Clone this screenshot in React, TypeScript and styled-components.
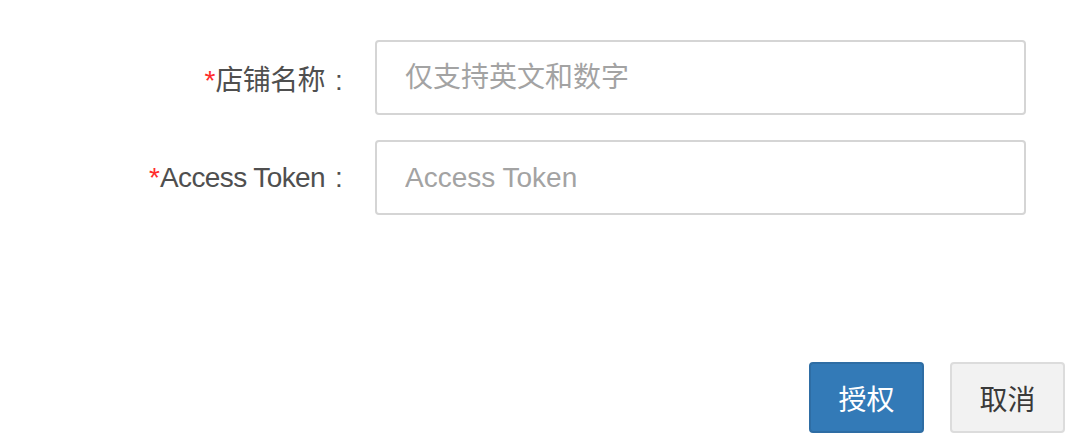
import styled, { createGlobalStyle } from 'styled-components';

const GlobalStyle = createGlobalStyle`
  html, body {
    margin: 0;
    padding: 0;
    background: #ffffff;
  }
  body {
    font-family: 'Liberation Sans', 'Noto Sans CJK SC', sans-serif;
  }
`;

const Form = styled.form`
  width: 1080px;
  height: 445px;
  box-sizing: border-box;
  padding: 40px 15px 0 0;
  display: flex;
  flex-direction: column;
`;

const FormRow = styled.div`
  display: grid;
  grid-template-columns: 347px 651px;
  column-gap: 28px;
  align-items: center;
  height: 75px;
  margin-bottom: 25px;
`;

const Label = styled.label`
  text-align: right;
  font-size: 28px;
  letter-spacing: -0.6px;
  color: #4f4f4f;
  white-space: nowrap;
`;

const Required = styled.span`
  color: #ff2b2b;
  letter-spacing: 0;
`;

const Colon = styled.span`
  display: inline-block;
  width: 16px;
  margin-left: 6px;
  text-align: center;
  letter-spacing: 0;
`;

const Input = styled.input`
  width: 100%;
  height: 75px;
  box-sizing: border-box;
  border: 2px solid #d5d5d5;
  border-radius: 4px;
  padding: 0 0 0 28px;
  font-family: 'Liberation Sans', 'Noto Sans CJK SC', sans-serif;
  font-size: 28px;
  color: #555555;
  outline: none;

  &::placeholder {
    color: #a3a3a3;
  }
`;

const Footer = styled.div`
  display: flex;
  justify-content: flex-end;
  gap: 26px;
  margin-top: 122px;
`;

const Button = styled.button<{ $primary?: boolean }>`
  width: 115px;
  height: 71px;
  box-sizing: border-box;
  border-radius: 4px;
  border: 2px solid ${(p) => (p.$primary ? '#2e6da4' : '#dcdcdc')};
  background: ${(p) => (p.$primary ? '#337ab7' : '#f2f2f2')};
  color: ${(p) => (p.$primary ? '#ffffff' : '#3a3a3a')};
  font-family: 'Liberation Sans', 'Noto Sans CJK SC', sans-serif;
  font-size: 28px;
  cursor: pointer;
  padding: 0;
`;

export default function App() {
  return (
    <>
      <GlobalStyle />
      <Form onSubmit={(e) => e.preventDefault()}>
        <FormRow>
          <Label>
            <Required>*</Required>店铺名称<Colon>:</Colon>
          </Label>
          <Input placeholder="仅支持英文和数字" />
        </FormRow>
        <FormRow>
          <Label>
            <Required>*</Required>Access Token<Colon>:</Colon>
          </Label>
          <Input placeholder="Access Token" />
        </FormRow>
        <Footer>
          <Button type="submit" $primary>
            授权
          </Button>
          <Button type="button">取消</Button>
        </Footer>
      </Form>
    </>
  );
}
